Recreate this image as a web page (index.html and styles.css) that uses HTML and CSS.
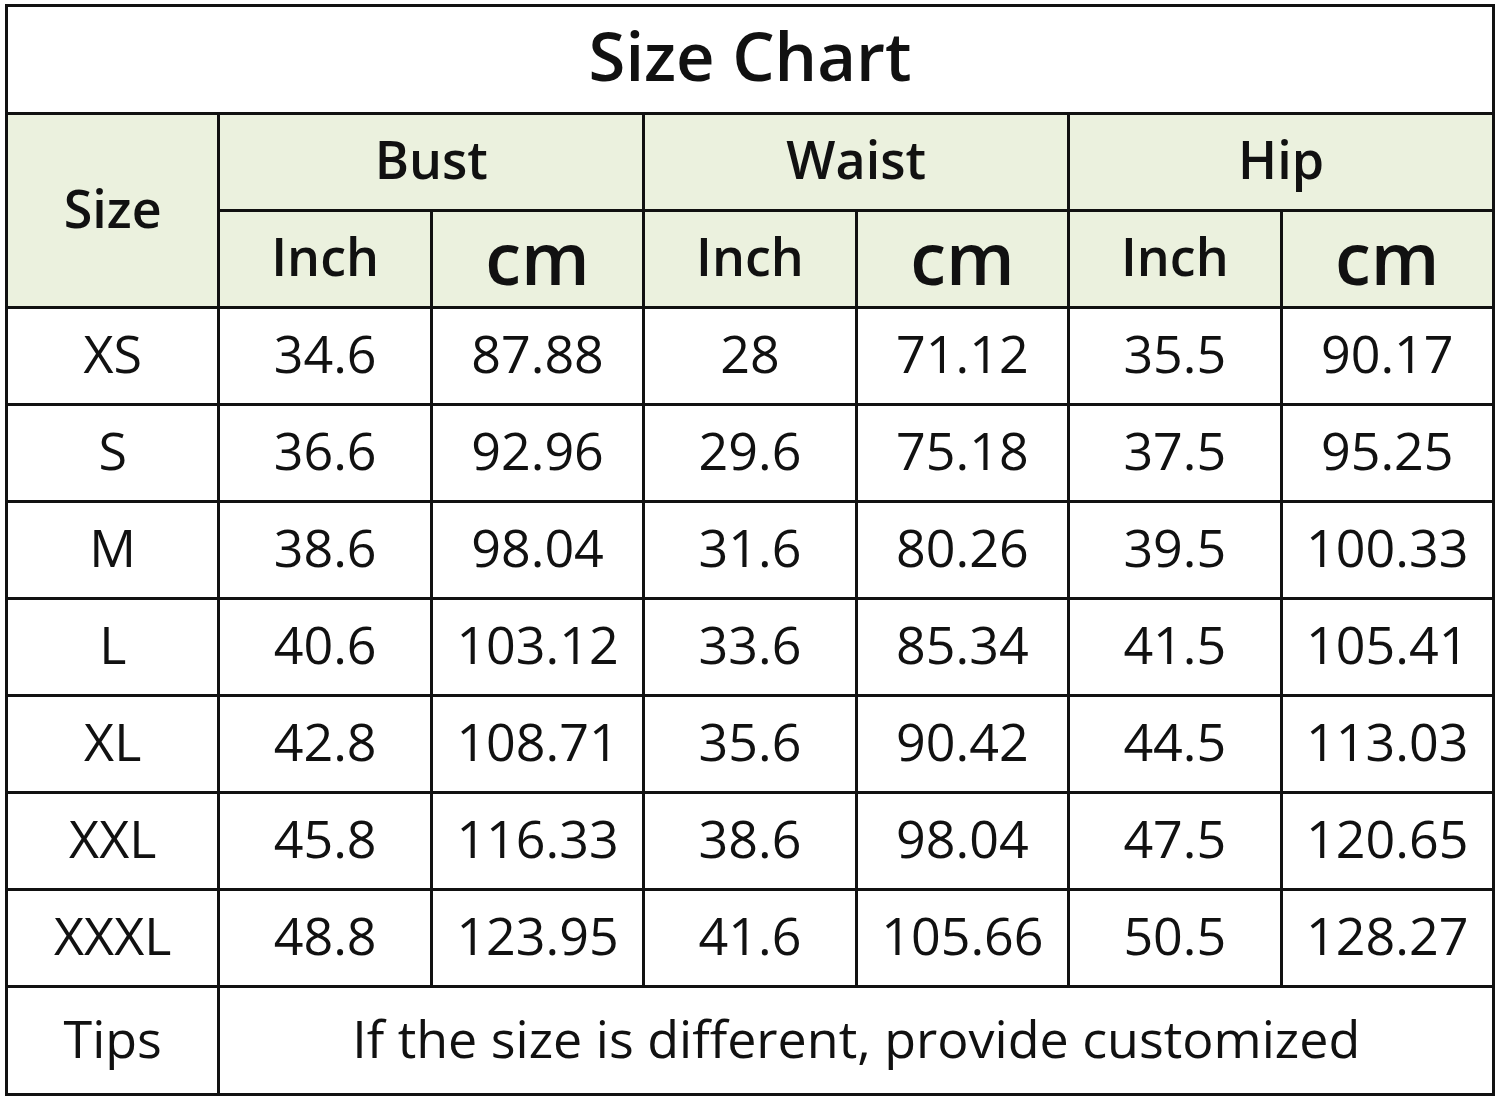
FILE: index.html
```html
<!DOCTYPE html>
<html lang="en">
<head>
<meta charset="utf-8">
<title>Size Chart</title>
<link rel="stylesheet" href="styles.css">
</head>
<body>
<table class="chart">
  <colgroup>
    <col><col><col><col><col><col><col>
  </colgroup>
  <tr class="title-row"><td colspan="7" class="title">Size Chart</td></tr>
  <tr class="head-row">
    <td rowspan="2" class="head">Size</td>
    <td colspan="2" class="head">Bust</td>
    <td colspan="2" class="head">Waist</td>
    <td colspan="2" class="head">Hip</td>
  </tr>
  <tr class="head-row">
    <td class="head">Inch</td><td class="head cm">cm</td>
    <td class="head">Inch</td><td class="head cm">cm</td>
    <td class="head">Inch</td><td class="head cm">cm</td>
  </tr>
  <tr class="data-row"><td>XS</td><td>34.6</td><td>87.88</td><td>28</td><td>71.12</td><td>35.5</td><td>90.17</td></tr>
  <tr class="data-row"><td>S</td><td>36.6</td><td>92.96</td><td>29.6</td><td>75.18</td><td>37.5</td><td>95.25</td></tr>
  <tr class="data-row"><td>M</td><td>38.6</td><td>98.04</td><td>31.6</td><td>80.26</td><td>39.5</td><td>100.33</td></tr>
  <tr class="data-row"><td>L</td><td>40.6</td><td>103.12</td><td>33.6</td><td>85.34</td><td>41.5</td><td>105.41</td></tr>
  <tr class="data-row"><td>XL</td><td>42.8</td><td>108.71</td><td>35.6</td><td>90.42</td><td>44.5</td><td>113.03</td></tr>
  <tr class="data-row"><td>XXL</td><td>45.8</td><td>116.33</td><td>38.6</td><td>98.04</td><td>47.5</td><td>120.65</td></tr>
  <tr class="data-row"><td>XXXL</td><td>48.8</td><td>123.95</td><td>41.6</td><td>105.66</td><td>50.5</td><td>128.27</td></tr>
  <tr class="tips-row"><td>Tips</td><td colspan="6">If the size is different, provide customized</td></tr>
</table>
</body>
</html>
```

FILE: styles.css
```css
html, body {
  margin: 0;
  padding: 0;
  background: #ffffff;
}
body {
  padding: 4px 5px 0 5px;
  font-family: "Open Sans", "Noto Sans", sans-serif;
  color: #111111;
}
.chart {
  width: 1490px;
  border-collapse: collapse;
  table-layout: fixed;
  border: 3px solid #111111;
}
.chart td {
  border: 3px solid #111111;
  padding: 0 0 6px 0;
  text-align: center;
  vertical-align: middle;
  font-size: 52px;
  line-height: 1;
  white-space: nowrap;
}
.title-row { height: 108px; }
.chart td.title {
  font-size: 67px;
  font-weight: 600;
  padding-bottom: 8px;
}
.head-row { height: 97px; }
.chart td.head {
  background: #ebf1de;
  font-weight: 600;
}
.chart td.head.cm {
  font-size: 72px;
  padding-bottom: 4px;
}
.data-row { height: 97px; }
.tips-row { height: 108px; }
```
